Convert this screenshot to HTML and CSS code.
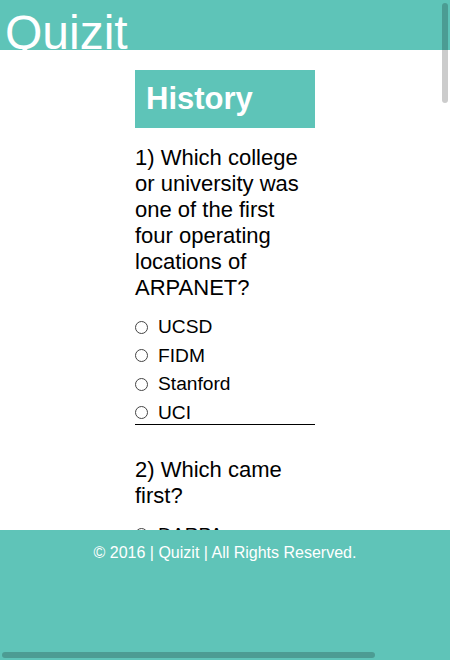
FILE: index.html
```html
<!DOCTYPE html>
<html lang="en">
<head>
<meta charset="utf-8">
<title>Quizit</title>
<link rel="stylesheet" href="styles.css">
</head>
<body>
<div class="page">
  <header class="site-header">
    <div class="logo">Quizit</div>
  </header>
  <main class="main">
    <section class="quiz">
      <h1 class="quiz-title">History</h1>
      <div class="question">
        <p class="question-text">1) Which college or university was one of the first four operating locations of ARPANET?</p>
        <div class="options">
          <label class="option"><input type="radio" name="q1" class="radio"><span>UCSD</span></label>
          <label class="option"><input type="radio" name="q1" class="radio"><span>FIDM</span></label>
          <label class="option"><input type="radio" name="q1" class="radio"><span>Stanford</span></label>
          <label class="option"><input type="radio" name="q1" class="radio"><span>UCI</span></label>
        </div>
      </div>
      <div class="question">
        <p class="question-text">2) Which came first?</p>
        <div class="options">
          <label class="option"><input type="radio" name="q2" class="radio"><span>DARPA</span></label>
          <label class="option"><input type="radio" name="q2" class="radio"><span>ARPA</span></label>
        </div>
      </div>
    </section>
  </main>
  <footer class="site-footer">© 2016 | Quizit | All Rights Reserved.</footer>
  <div class="thumb thumb-v"></div>
  <div class="thumb thumb-h"></div>
</div>
</body>
</html>
```

FILE: styles.css
```css
html, body {
  margin: 0;
  padding: 0;
  height: 100%;
  overflow: hidden;
}
body {
  font-family: "Liberation Sans", Arial, sans-serif;
  color: #000;
  background: #fff;
}
.page {
  position: relative;
  height: 660px;
  display: flex;
  flex-direction: column;
  overflow: hidden;
}
.site-header {
  flex: 0 0 50px;
  height: 50px;
  background: #5ec4b8;
  position: relative;
  z-index: 2;
}
.logo {
  color: #fff;
  font-size: 48px;
  line-height: 55px;
  padding: 5px 0 0 5px;
  white-space: nowrap;
}
.main {
  flex: 1 1 auto;
  overflow: hidden;
  padding-top: 20px;
}
.quiz {
  width: 180px;
  margin: 0 auto;
}
.quiz-title {
  margin: 0 0 17px;
  height: 58px;
  line-height: 58px;
  padding: 0 11px;
  background: #5ec4b8;
  color: #fff;
  font-size: 31px;
  font-weight: bold;
}
.question {
  border-bottom: 1px solid #000;
  margin-bottom: 32px;
}
.question-text {
  margin: 0 0 15px;
  font-size: 22px;
  line-height: 26px;
}
.options {
  display: flex;
  flex-direction: column;
  gap: 6.67px;
}
.option {
  display: flex;
  align-items: center;
  height: 22px;
  font-size: 19.2px;
  line-height: 22px;
}
.radio {
  appearance: none;
  -webkit-appearance: none;
  width: 13px;
  height: 13px;
  margin: 0 10px 0 0;
  border: 1px solid #444;
  border-radius: 50%;
  box-sizing: border-box;
  background: #fff;
  flex: 0 0 auto;
}
.site-footer {
  flex: 0 0 130px;
  height: 130px;
  box-sizing: border-box;
  background: #5fc4b8;
  color: #fff;
  font-size: 16px;
  line-height: 18px;
  padding-top: 14px;
  text-align: center;
}
.thumb {
  position: absolute;
  background: rgba(0, 0, 0, 0.2);
  border-radius: 3px;
  z-index: 5;
}
.thumb-v {
  right: 2px;
  top: 3px;
  width: 6px;
  height: 100px;
}
.thumb-h {
  left: 2px;
  bottom: 2px;
  width: 373px;
  height: 6px;
}
```
